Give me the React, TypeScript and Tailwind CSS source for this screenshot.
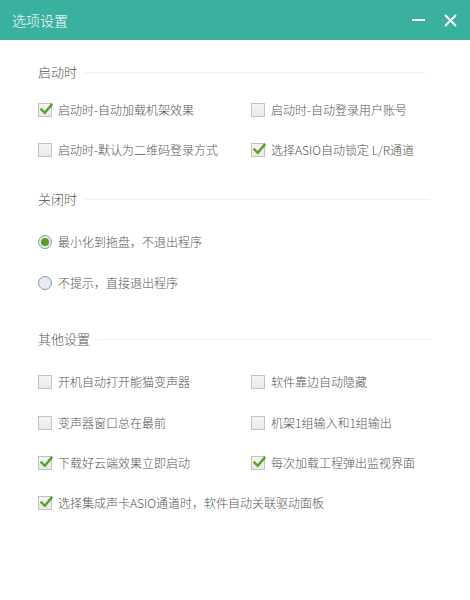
import React from 'react';

const font = { fontFamily: '"Microsoft YaHei", "Noto Sans CJK SC", sans-serif' };

const Checkbox = ({ checked }: { checked: boolean }) => (
  <span className="relative flex h-[14px] w-[14px] shrink-0 items-center justify-center border border-[#c3c3c3] bg-gradient-to-b from-[#f4f4f4] to-[#e9e9e9]">
    {checked && (
      <svg width="13" height="12" viewBox="0 0 13 12" className="absolute -top-[1px] left-[1px]">
        <path d="M1.5 6.5 L4.8 9.8 L11.5 1.8" fill="none" stroke="#57a12a" strokeWidth="2.4" strokeLinecap="square" />
      </svg>
    )}
  </span>
);

const Radio = ({ checked }: { checked: boolean }) => (
  <span className="flex h-[14px] w-[14px] shrink-0 items-center justify-center rounded-full border border-[#8a98a8] bg-[#e6ebf1]">
    {checked && <span className="h-[8px] w-[8px] rounded-full bg-[#5a9f1d]" />}
  </span>
);

const Item = ({ checked, label }: { checked: boolean; label: string }) => (
  <div className="flex items-center gap-[6px] text-[12px] font-light text-[#555]">
    <Checkbox checked={checked} />
    <span>{label}</span>
  </div>
);

const SectionTitle = ({ title, lineEnd }: { title: string; lineEnd: string }) => (
  <div className={`flex h-5 items-center gap-[8px] ${lineEnd}`}>
    <span className="text-[13px] font-light text-[#555]">{title}</span>
    <span className="h-px flex-1 bg-[#f0f0f0]" />
  </div>
);

export default function App() {
  return (
    <div className="h-[600px] w-[470px] bg-white" style={font}>
      <div className="flex h-10 items-center justify-between bg-[#3ab09e] pl-[12px] pr-[13px]">
        <span className="text-[14px] font-light text-white">选项设置</span>
        <div className="flex items-center gap-[19px]">
          <span className="h-[2px] w-[13px] bg-white" />
          <svg width="13" height="13" viewBox="0 0 13 13">
            <path d="M1 1 L12 12 M12 1 L1 12" stroke="#fff" strokeWidth="2" />
          </svg>
        </div>
      </div>

      <div className="pl-[38px]">
        <div className="mt-[22px]">
          <SectionTitle title="启动时" lineEnd="mr-[45px]" />
        </div>
        <div className="mt-[7px] grid grid-cols-[213px_1fr] grid-rows-[41px_40px] items-center">
          <Item checked label="启动时-自动加载机架效果" />
          <Item checked={false} label="启动时-自动登录用户账号" />
          <Item checked={false} label="启动时-默认为二维码登录方式" />
          <Item checked label="选择ASIO自动锁定 L/R通道" />
        </div>

        <div className="mt-[19px]">
          <SectionTitle title="关闭时" lineEnd="mr-[40px]" />
        </div>
        <div className="mt-[12px] flex flex-col">
          <div className="flex h-[42px] items-center gap-[6px] text-[12px] font-light text-[#555]">
            <Radio checked />
            <span>最小化到拖盘，不退出程序</span>
          </div>
          <div className="flex h-10 items-center gap-[6px] text-[12px] font-light text-[#555]">
            <Radio checked={false} />
            <span>不提示，直接退出程序</span>
          </div>
        </div>

        <div className="mt-[26px]">
          <SectionTitle title="其他设置" lineEnd="mr-[39px]" />
        </div>
        <div className="mt-[13px] grid grid-cols-[213px_1fr] grid-rows-[40px_41px_40px_40px] items-center">
          <Item checked={false} label="开机自动打开能猫变声器" />
          <Item checked={false} label="软件靠边自动隐藏" />
          <Item checked={false} label="变声器窗口总在最前" />
          <Item checked={false} label="机架1组输入和1组输出" />
          <Item checked label="下载好云端效果立即启动" />
          <Item checked label="每次加载工程弹出监视界面" />
          <div className="col-span-2">
            <Item checked label="选择集成声卡ASIO通道时，软件自动关联驱动面板" />
          </div>
        </div>
      </div>
    </div>
  );
}
